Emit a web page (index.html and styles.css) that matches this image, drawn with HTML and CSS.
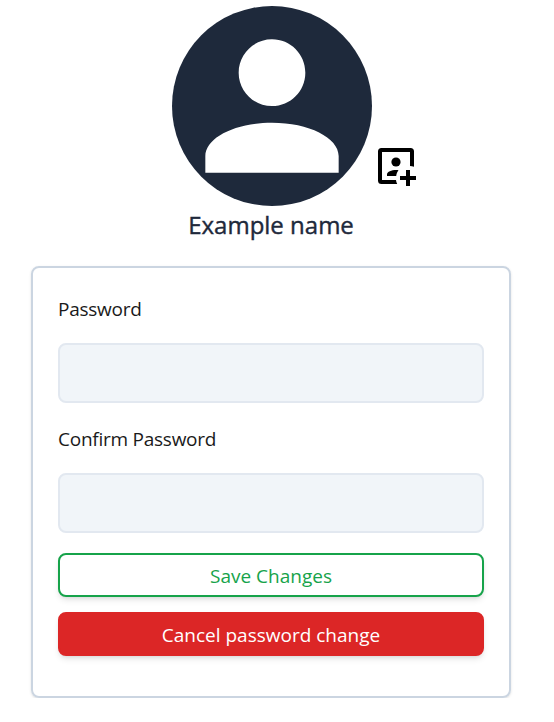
FILE: index.html
```html
<!DOCTYPE html>
<html lang="en">
<head>
<meta charset="utf-8">
<title>Profile</title>
<link rel="stylesheet" href="styles.css">
</head>
<body>
<main class="profile">
  <header class="identity">
    <div class="avatar">
      <svg class="avatar-image" viewBox="0 0 24 24" aria-hidden="true">
        <circle cx="12" cy="12" r="12" fill="#1e293b"/>
        <path fill="#fff" d="M12 12c2.21 0 4-1.79 4-4s-1.79-4-4-4-4 1.79-4 4 1.79 4 4 4zm0 2c-4.42 0-8 1.79-8 4v2h16v-2c0-2.21-3.58-4-8-4z"/>
      </svg>
      <button class="avatar-upload" type="button" aria-label="Change picture">
        <svg width="38" height="38" viewBox="0 0 38 38" aria-hidden="true">
          <path d="M3.500 0H32.500Q36 0 36 3.500V18.700Q34 18 32 18V4H4V32H18Q18.200 34.200 19.200 36H3.500Q0 36 0 32.500V3.500Q0 0 3.500 0Z"/>
          <circle cx="18" cy="14" r="4.600"/>
          <path d="M9 28V26.200C9.500 23.500 14 21.700 20.500 22.200C19.300 23.700 18.500 25.600 18.200 28Z"/>
          <path d="M28 22h4v6h6v4h-6v6h-4v-6h-6v-4h6z"/>
        </svg>
      </button>
    </div>
    <h1 class="name">Example name</h1>
  </header>
  <form class="card">
    <label class="label" for="password">Password</label>
    <input class="field" id="password" type="password">
    <label class="label" for="confirm">Confirm Password</label>
    <input class="field" id="confirm" type="password">
    <button class="button save" type="button">Save Changes</button>
    <button class="button cancel" type="button">Cancel password change</button>
  </form>
</main>
</body>
</html>
```
FILE: styles.css
```css
* { box-sizing: border-box; }
body {
  margin: 0;
  background: #fff;
  font-family: "Segoe UI", "Open Sans", "Noto Sans", sans-serif;
  font-size: 19px;
  color: #000;
}
.profile { width: 480px; margin: 6px 0 0 31px; }
.identity { display: flex; flex-direction: column; align-items: center; }
.avatar { position: relative; width: 200px; height: 200px; margin-left: 2px; }
.avatar-image { display: block; width: 200px; height: 200px; }
.avatar-upload {
  position: absolute;
  left: 206px;
  top: 142px;
  padding: 0;
  border: 0;
  background: none;
  line-height: 0;
}
.name {
  margin: 0;
  height: 40px;
  line-height: 38px;
  font-size: 24px;
  font-weight: 500;
  color: #1e293b;
  -webkit-text-stroke: .4px #1e293b;
}
.card {
  display: flex;
  flex-direction: column;
  height: 432px;
  margin: 20px 0 0;
  padding: 25px;
  border: 2px solid #cbd5e1;
  border-radius: 8px;
  box-shadow: 0 1px 3px rgb(0 0 0 / .1), 0 1px 2px -1px rgb(0 0 0 / .1);
}
.label { height: 50px; line-height: 32px; letter-spacing: -.25px; color: #1a1a1a; }
.field {
  width: 100%;
  height: 60px;
  margin: 0 0 20px;
  border: 2px solid #e2e8f0;
  border-radius: 8px;
  background: #f1f5f9;
}
.button {
  height: 44px;
  margin: 0 0 15px;
  padding: 2px 0 0;
  border: 2px solid;
  border-radius: 8px;
  font: inherit;
  line-height: 38px;
  box-shadow: 0 4px 6px -1px rgb(0 0 0 / .1), 0 2px 4px -2px rgb(0 0 0 / .1);
}
.save { border-color: #16a34a; background: #fff; color: #16a34a; }
.cancel { border-color: #dc2626; background: #dc2626; color: #fff; }
```
